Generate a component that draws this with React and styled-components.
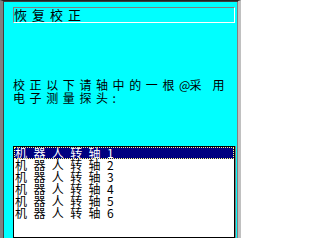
import React from "react";
import styled, { createGlobalStyle } from "styled-components";

const Global = createGlobalStyle`
  html, body { margin: 0; padding: 0; background: #ffffff; }
  body { width: 241px; height: 238px; overflow: hidden; }
`;

const Frame = styled.div`
  box-sizing: border-box;
  width: 241px;
  height: 238px;
  overflow: hidden;
  background: #00ffff;
  border-top: 1px solid #202020;
  border-left: 3px solid #808080;
  border-right: 3px solid #c0c0c0;
  box-shadow: inset 1px 1px 0 #404040, inset -1px 0 0 #808080;
  padding: 6px 3px 0 10px;
  display: flex;
  flex-direction: column;
  font-family: "Noto Sans CJK SC", "DejaVu Sans", sans-serif;
  color: #000;
`;

const TitleBox = styled.div`
  box-sizing: border-box;
  height: 16px;
  border-top: 1px solid #808080;
  border-left: 1px solid #808080;
  border-bottom: 1px solid #ffffff;
  border-right: 1px solid #ffffff;
  padding-left: 0px;
  font-size: 13px;
  line-height: 14px;
  letter-spacing: 5px;
  white-space: nowrap;
`;

const Prompt = styled.div`
  margin-top: 55px;
  font-size: 12px;
  line-height: 13px;
  letter-spacing: 4.6px;
  white-space: nowrap;
`;

const Tight = styled.span`
  letter-spacing: ${(p) => p.$ls}px;
`;

const ListBox = styled.div`
  box-sizing: border-box;
  margin-top: 42px;
  height: 110px;
  background: #ffffff;
  border: 1px solid #000;
  box-shadow: 1px 0 0 #808080;
  padding: 0;
`;

const Row = styled.div`
  box-sizing: border-box;
  height: 12px;
  line-height: 12px;
  font-size: 12px;
  letter-spacing: 6.4px;
  padding-left: 1px;
  white-space: nowrap;
  color: ${(p) => (p.$selected ? "#ffffff" : "#000000")};
  background: ${(p) => (p.$selected ? "#000080" : "transparent")};
  outline: ${(p) => (p.$selected ? "1px dotted #ffff80" : "none")};
  outline-offset: -1px;
`;

const items = [1, 2, 3, 4, 5, 6];

export default function App() {
  return (
    <>
      <Global />
      <Frame>
        <TitleBox>恢复校正</TitleBox>
        <Prompt>
          校正以下请轴中的一根<Tight $ls={-1}>@</Tight>
          <Tight $ls={11}>采</Tight>用
          <br />
          电子测量探头:
        </Prompt>
        <ListBox>
          {items.map((n) => (
            <Row key={n} $selected={n === 1}>
              机器人转轴{n}
            </Row>
          ))}
        </ListBox>
      </Frame>
    </>
  );
}
